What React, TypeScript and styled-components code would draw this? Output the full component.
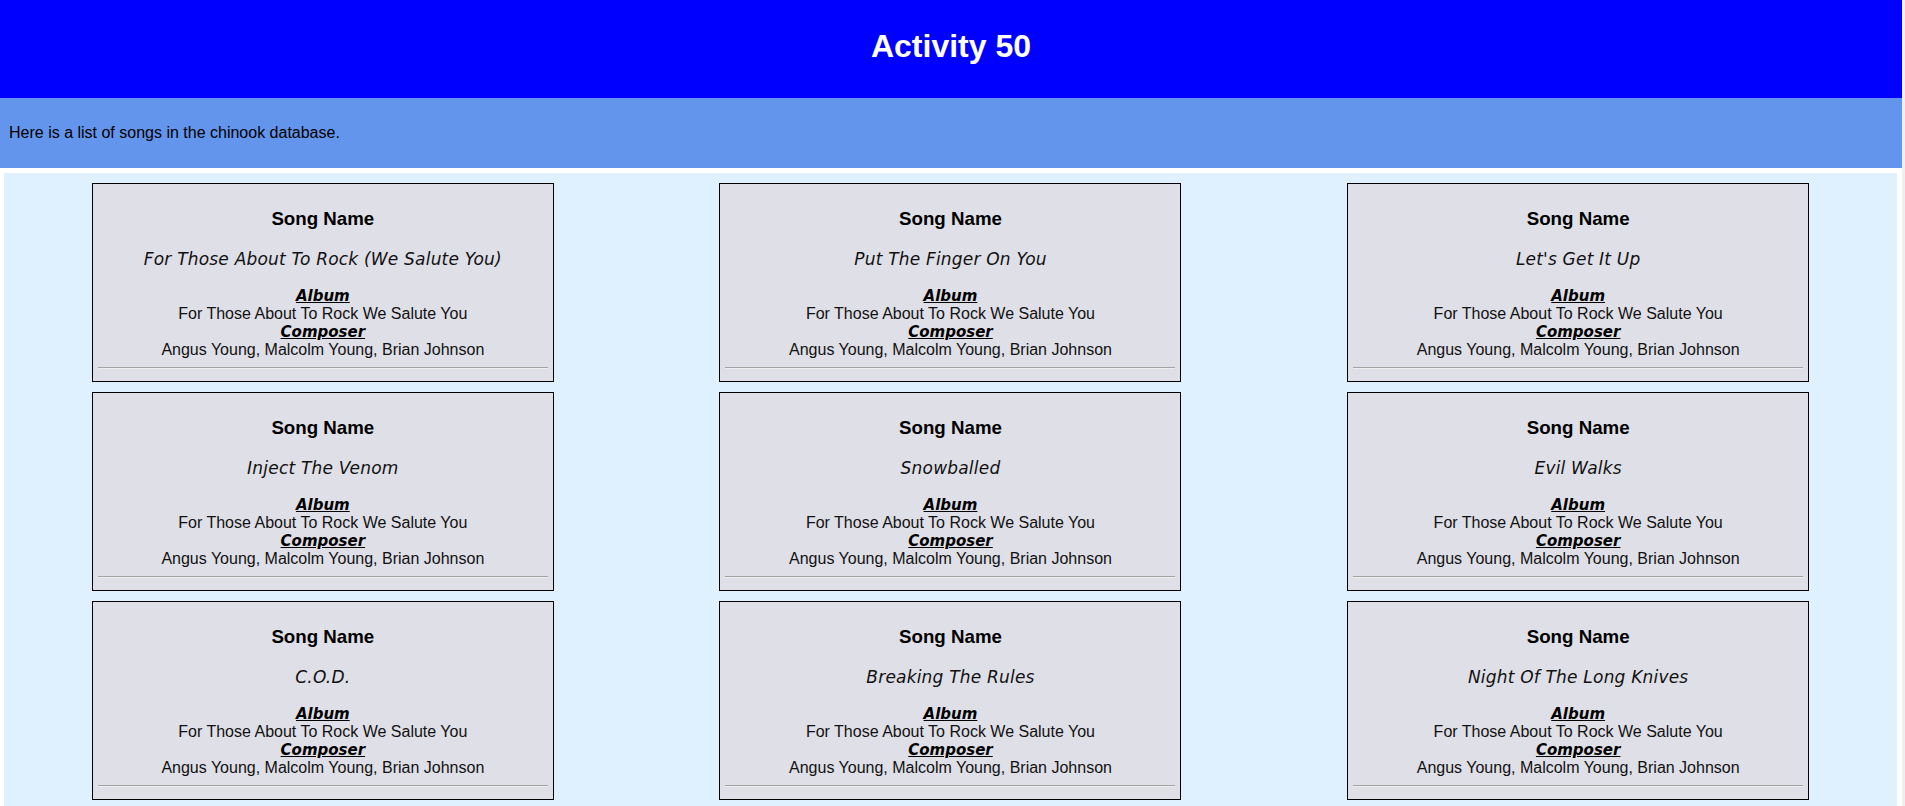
import React from "react";
import styled, { createGlobalStyle } from "styled-components";

const GlobalStyle = createGlobalStyle`
  html {
    background: #f0f0f0;
  }
  body {
    margin: 0 3px 0 0;
    background: #ffffff;
    font-family: "Liberation Sans", Arial, sans-serif;
    color: #000;
  }
  * { box-sizing: border-box; }
`;

const Header = styled.header`
  background: #0000ff;
  color: #ffffff;
  height: 98px;
  padding-top: 28px;
  text-align: center;
`;

const Title = styled.h1`
  margin: 0;
  font-size: 32px;
  line-height: 37px;
  font-weight: 700;
`;

const Intro = styled.div`
  background: #6495ed;
  height: 70px;
  padding: 26px 9px;
  font-size: 16px;
  line-height: 18px;
`;

const Grid = styled.main`
  margin: 5px 5px 0 4px;
  background: #dff0fe;
  padding: 10px 5px;
  display: grid;
  grid-template-columns: repeat(3, 1fr);
  justify-items: center;
  row-gap: 10px;
`;

const Card = styled.article`
  width: 462px;
  border: 1px solid #000;
  background: #dfdfe7;
  padding: 24px 5px 12px;
  text-align: center;
`;

const CardHeading = styled.h3`
  margin: 0;
  font-size: 18.72px;
  line-height: 22px;
  font-weight: 700;
`;

const SongTitle = styled.p`
  margin: 19px 0 0;
  font-family: "DejaVu Sans", Verdana, sans-serif;
  font-style: italic;
  font-size: 17px;
  line-height: 20px;
  letter-spacing: 0.2px;
  color: #111;
`;

const Details = styled.div`
  margin-top: 18px;
  font-size: 16px;
  line-height: 18px;
  display: flex;
  flex-direction: column;
  align-items: center;
`;

const Label = styled.span`
  font-family: "DejaVu Sans", Verdana, sans-serif;
  font-weight: 700;
  font-style: italic;
  font-size: 15px;
  text-decoration: underline;
`;

const Value = styled.span`
  color: #111;
`;

const Rule = styled.hr`
  margin: 8px 0 0;
  border: none;
  border-top: 1px solid #a3a3a3;
  border-bottom: 1px solid #eeeeee;
  height: 0;
`;

type Song = { name: string; album: string; composer: string };

const ALBUM = "For Those About To Rock We Salute You";
const COMPOSER = "Angus Young, Malcolm Young, Brian Johnson";

const songs: Song[] = [
  "For Those About To Rock (We Salute You)",
  "Put The Finger On You",
  "Let's Get It Up",
  "Inject The Venom",
  "Snowballed",
  "Evil Walks",
  "C.O.D.",
  "Breaking The Rules",
  "Night Of The Long Knives",
].map((name) => ({ name, album: ALBUM, composer: COMPOSER }));

function SongCard({ song }: { song: Song }) {
  return (
    <Card>
      <CardHeading>Song Name</CardHeading>
      <SongTitle>{song.name}</SongTitle>
      <Details>
        <Label>Album</Label>
        <Value>{song.album}</Value>
        <Label>Composer</Label>
        <Value>{song.composer}</Value>
      </Details>
      <Rule />
    </Card>
  );
}

export default function App() {
  return (
    <>
      <GlobalStyle />
      <Header>
        <Title>Activity 50</Title>
      </Header>
      <Intro>Here is a list of songs in the chinook database.</Intro>
      <Grid>
        {songs.map((s, i) => (
          <SongCard key={i} song={s} />
        ))}
      </Grid>
    </>
  );
}
